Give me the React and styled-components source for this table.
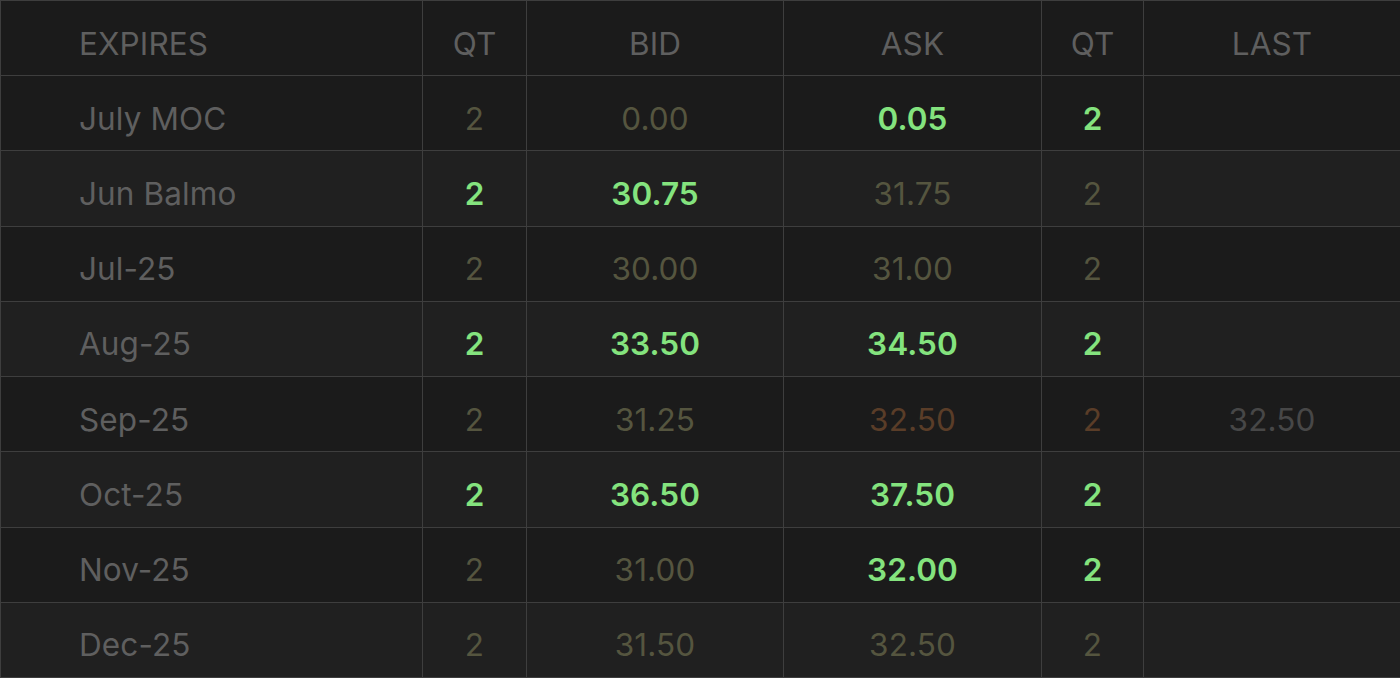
import React from "react";
import styled, { createGlobalStyle } from "styled-components";

const Global = createGlobalStyle`
  html, body { margin: 0; padding: 0; background: #1b1b1b; }
  body { font-family: Inter, "Noto Sans", sans-serif; }
`;

const Grid = styled.div`
  display: grid;
  grid-template-columns: 422px 104px 257px 258px 102px 257px;
  grid-auto-rows: 75.22px;
  width: 1400px;
  border-top: 1px solid #3e3e3e;
  border-left: 1px solid #3e3e3e;
  box-sizing: border-box;
`;

const Cell = styled.div`
  box-sizing: border-box;
  border-right: 1px solid #3e3e3e;
  border-bottom: 1px solid #3e3e3e;
  background: ${(p) => (p.$alt ? "#202020" : "#1b1b1b")};
  display: flex;
  align-items: center;
  justify-content: ${(p) => (p.$left ? "flex-start" : "center")};
  padding: 10px 0 0 ${(p) => (p.$left ? "78px" : "0")};
  font-size: 31.5px;
  letter-spacing: 0.1px;
  color: ${(p) => p.$color};
  font-weight: ${(p) => (p.$bold ? 600 : 400)};
`;

const C = {
  label: "#5f5f5f",
  dim: "#55553f",
  green: "#84e37e",
  brown: "#5a3d28",
  last: "#474747",
};

const headers = ["EXPIRES", "QT", "BID", "ASK", "QT", "LAST"];

const rows = [
  ["July MOC", ["2", "dim"], ["0.00", "dim"], ["0.05", "green"], ["2", "green"], null],
  ["Jun Balmo", ["2", "green"], ["30.75", "green"], ["31.75", "dim"], ["2", "dim"], null],
  ["Jul-25", ["2", "dim"], ["30.00", "dim"], ["31.00", "dim"], ["2", "dim"], null],
  ["Aug-25", ["2", "green"], ["33.50", "green"], ["34.50", "green"], ["2", "green"], null],
  ["Sep-25", ["2", "dim"], ["31.25", "dim"], ["32.50", "brown"], ["2", "brown"], ["32.50", "last"]],
  ["Oct-25", ["2", "green"], ["36.50", "green"], ["37.50", "green"], ["2", "green"], null],
  ["Nov-25", ["2", "dim"], ["31.00", "dim"], ["32.00", "green"], ["2", "green"], null],
  ["Dec-25", ["2", "dim"], ["31.50", "dim"], ["32.50", "dim"], ["2", "dim"], null],
];

export default function App() {
  return (
    <>
      <Global />
      <Grid>
        {headers.map((h, i) => (
          <Cell key={h + i} $left={i === 0} $color={C.label}>
            {h}
          </Cell>
        ))}
        {rows.map((r, ri) => {
          const alt = ri % 2 === 1;
          return (
            <React.Fragment key={r[0]}>
              <Cell $left $alt={alt} $color={C.label}>
                {r[0]}
              </Cell>
              {r.slice(1).map((v, ci) => (
                <Cell
                  key={ci}
                  $alt={alt}
                  $color={v ? C[v[1]] : C.label}
                  $bold={v && v[1] === "green"}
                >
                  {v ? v[0] : ""}
                </Cell>
              ))}
            </React.Fragment>
          );
        })}
      </Grid>
    </>
  );
}
